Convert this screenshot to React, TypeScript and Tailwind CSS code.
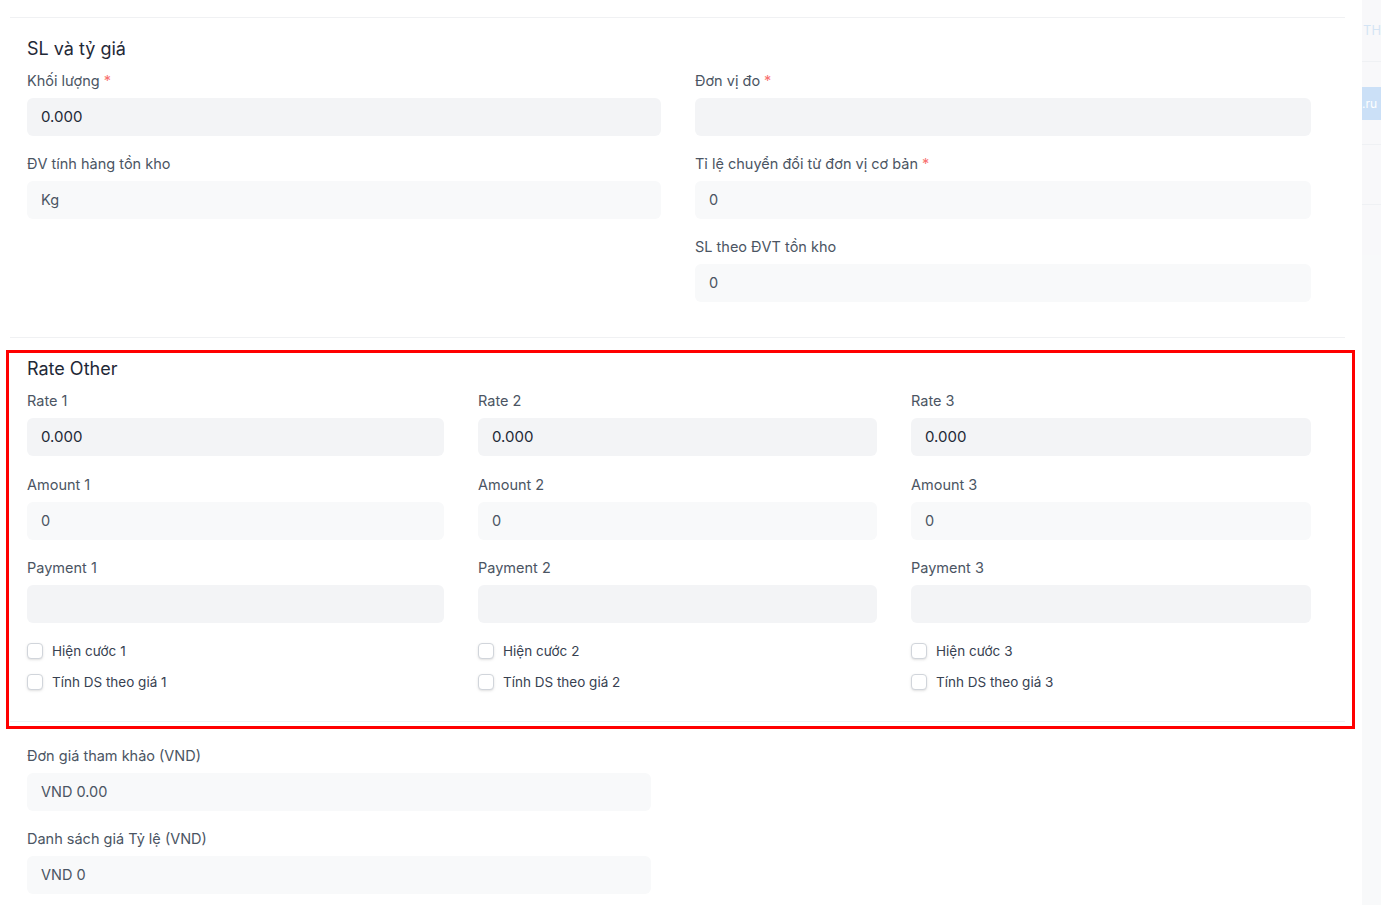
import React from "react";

type Field = { label: string; value?: string; required?: boolean; editable?: boolean };

function Input({ value, editable }: { value?: string; editable?: boolean }) {
  return (
    <div
      className={
        "h-[38px] rounded-md flex items-center px-[14px] " +
        (editable ? "bg-[#f3f4f6] text-[#1f2937] text-[15px]" : "bg-[#f8f9fa] text-[#4b5563] text-[14.5px]")
      }
    >
      {value}
    </div>
  );
}

function FormField({ label, value, required, editable }: Field) {
  return (
    <div className="flex flex-col">
      <div className="h-5 leading-5 text-[14.5px] text-[#4b5563] mt-[1px] mb-[7px]">
        {label}
        {required && <span className="text-[#f87171] ml-1">*</span>}
      </div>
      <Input value={value} editable={editable} />
    </div>
  );
}

function Checkbox({ label }: { label: string }) {
  return (
    <label className="flex items-center h-5 gap-[9px] text-[13.5px] text-[#374151]">
      <span className="w-4 h-4 rounded-[4px] border border-[#d1d5db] bg-white shadow-sm" />
      {label}
    </label>
  );
}

const rateCols = [1, 2, 3];

export default function App() {
  return (
    <div
      className="h-[905px] w-[1381px] overflow-hidden bg-white flex"
      style={{ fontFamily: "Inter, 'Noto Sans', sans-serif" }}
    >
      <div className="w-[1362px] pl-[10px] pr-[17px] pt-[17px]">
        {/* SL và tỷ giá */}
        <section className="border-t border-[#f0f1f3] px-[17px] pt-[17px] pb-[35px]">
          <h2 className="text-[18px] leading-7 text-[#1f2937] mb-[7px]">SL và tỷ giá</h2>
          <div className="grid grid-cols-[634px_616px] gap-x-[34px] gap-y-[17px]">
            <FormField label="Khối lượng" required value="0.000" editable />
            <FormField label="Đơn vị đo" required editable />
            <FormField label="ĐV tính hàng tồn kho" value="Kg" />
            <FormField label="Tỉ lệ chuyển đổi từ đơn vị cơ bản" required value="0" />
            <div />
            <FormField label="SL theo ĐVT tồn kho" value="0" />
          </div>
        </section>

        {/* Rate Other */}
        <section className="relative border-t border-[#f0f1f3] px-[17px] pt-[17px] pb-[29px]">
          <h2 className="text-[18px] leading-7 text-[#1f2937] mb-[7px]">Rate Other</h2>
          <div className="grid grid-cols-[417px_399px_400px] gap-x-[34px]">
            {rateCols.map((n) => (
              <div key={n} className="flex flex-col">
                <FormField label={`Rate ${n}`} value="0.000" editable />
                <div className="mt-[18px]">
                  <FormField label={`Amount ${n}`} value="0" />
                </div>
                <div className="mt-[17px]">
                  <FormField label={`Payment ${n}`} editable />
                </div>
                <div className="flex flex-col gap-[11px] mt-[18px]">
                  <Checkbox label={`Hiện cước ${n}`} />
                  <Checkbox label={`Tính DS theo giá ${n}`} />
                </div>
              </div>
            ))}
          </div>
          <div className="pointer-events-none absolute top-[12px] left-[-4px] right-[-10px] bottom-[-8px] border-[3px] border-[#ff0000] z-10" />
        </section>

        {/* Đơn giá */}
        <section className="border-t border-[#f0f1f3] px-[17px] pt-[23px]">
          <div className="w-[624px] flex flex-col gap-[17px]">
            <FormField label="Đơn giá tham khảo (VND)" value="VND 0.00" />
            <FormField label="Danh sách giá Tỷ lệ (VND)" value="VND 0" />
          </div>
        </section>
      </div>

      {/* faded side panel */}
      <div className="flex-1 bg-[#f4f5f7] overflow-hidden opacity-60">
        <div className="h-[62px] border-b border-[#e6e9ee] flex items-center text-[13px] text-[#b9d3ee] whitespace-nowrap pl-[1px]">
          TH
        </div>
        <div className="h-[25px]" />
        <div className="h-[33px] bg-[#a9cdf2] flex items-center text-[12px] text-white whitespace-nowrap">
          .ru
        </div>
        <div className="h-[25px] border-b border-[#e6e9ee]" />
        <div className="h-[60px] border-b border-[#e6e9ee]" />
      </div>
    </div>
  );
}
